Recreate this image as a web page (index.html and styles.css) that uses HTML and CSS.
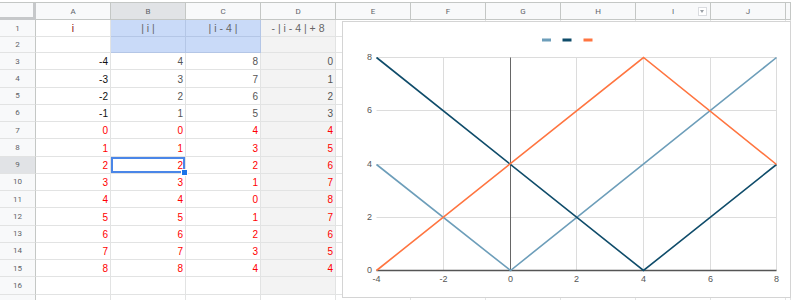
FILE: index.html
```html
<!DOCTYPE html>
<html lang="en">

<head>
      <meta charset="UTF-8">
      <title>Sheet with chart</title>
      <link rel="stylesheet" href="styles.css">
</head>

<body>
      <div class="sheet" id="sheet"></div>

      <!-- Biểu đồ nổi trên lưới -->
      <div class="chart">
            <svg width="447" height="275" viewBox="0 0 447 275">
                  <g class="legend">
                        <rect x="199" y="16.5" width="9" height="3" fill="#6d9eba"></rect>
                        <rect x="219.5" y="16.5" width="9" height="3" fill="#0f4c6a"></rect>
                        <rect x="240.5" y="16.5" width="9" height="3" fill="#ff7540"></rect>
                  </g>
                  <g stroke="#dcdcdc" stroke-width="1">
                        <line x1="33.5" y1="35.5" x2="433.5" y2="35.5"></line>
                        <line x1="33.5" y1="88.5" x2="433.5" y2="88.5"></line>
                        <line x1="33.5" y1="142.5" x2="433.5" y2="142.5"></line>
                        <line x1="33.5" y1="195.5" x2="433.5" y2="195.5"></line>
                        <line x1="100.5" y1="35.5" x2="100.5" y2="248.5"></line>
                        <line x1="233.5" y1="35.5" x2="233.5" y2="248.5"></line>
                        <line x1="300.5" y1="35.5" x2="300.5" y2="248.5"></line>
                        <line x1="367.5" y1="35.5" x2="367.5" y2="248.5"></line>
                        <line x1="433.5" y1="35.5" x2="433.5" y2="248.5"></line>
                  </g>
                  <line x1="167.5" y1="35.5" x2="167.5" y2="248.5" stroke="#666" stroke-width="1"></line>
                  <line x1="33.5" y1="248.5" x2="433.5" y2="248.5" stroke="#555" stroke-width="1.5"></line>
                  <g fill="none" stroke-width="1.6" stroke-linejoin="miter">
                        <polyline points="33.5,142.5 167.5,248.5 433.5,35.5" stroke="#6d9eba"></polyline>
                        <polyline points="33.5,35.5 300.5,248.5 433.5,142.5" stroke="#0f4c6a"></polyline>
                        <polyline points="33.5,248.5 300.5,35.5 433.5,142.5" stroke="#ff7540"></polyline>
                  </g>
                  <g class="axis-y" text-anchor="end">
                        <text x="29" y="38">8</text>
                        <text x="29" y="91">6</text>
                        <text x="29" y="145">4</text>
                        <text x="29" y="198">2</text>
                        <text x="29" y="251">0</text>
                  </g>
                  <g class="axis-x" text-anchor="middle">
                        <text x="33.5" y="260">-4</text>
                        <text x="100.5" y="260">-2</text>
                        <text x="167.5" y="260">0</text>
                        <text x="233.5" y="260">2</text>
                        <text x="300.5" y="260">4</text>
                        <text x="367.5" y="260">6</text>
                        <text x="433.5" y="260">8</text>
                  </g>
            </svg>
      </div>

      <script>
            const sheet = document.getElementById('sheet');
            const letters = ['A', 'B', 'C', 'D', 'E', 'F', 'G', 'H', 'I', 'J'];
            const titles = ['i', '| i |', '| i - 4 |', '- | i - 4 | + 8'];

            function addCell(cls, text) {
                  const d = document.createElement('div');
                  d.className = 'cell ' + cls;
                  if (text !== undefined) d.textContent = text;
                  sheet.appendChild(d);
                  return d;
            }

            // Hàng tiêu đề cột
            addCell('corner');
            letters.forEach(function (l) {
                  const h = addCell('colhead' + (l === 'B' ? ' active' : ''), l);
                  if (l === 'I') {
                        const f = document.createElement('span');
                        f.className = 'filter';
                        h.appendChild(f);
                  }
            });
            addCell('colhead');

            // Các hàng dữ liệu (hàng 17 chỉ lộ một phần ở mép dưới)
            for (let r = 1; r <= 17; r++) {
                  addCell('rownum' + (r === 9 ? ' active' : ''), r < 17 ? r : '');
                  for (let c = 0; c <= 10; c++) {
                        let cls = '';
                        let text = '';
                        if ((c === 1 || c === 2) && r <= 2) cls += ' blue';
                        if (c === 3 && r <= 16) cls += ' gray';
                        if (r === 1 && c <= 3) {
                              cls += ' title' + (c === 0 ? ' red-title' : '');
                              text = titles[c];
                        }
                        if (r >= 3 && r <= 15 && c <= 3) {
                              const i = r - 7;
                              const vals = [i, Math.abs(i), Math.abs(i - 4), 8 - Math.abs(i - 4)];
                              text = vals[c];
                              if (i >= 0) cls += ' red';
                              else if (c === 0) cls += ' black';
                              else cls += ' dim';
                        }
                        const d = addCell(cls, text);
                        if (r === 9 && c === 1) {
                              d.classList.add('sel');
                              const h = document.createElement('span');
                              h.className = 'handle';
                              d.appendChild(h);
                        }
                  }
            }
      </script>
</body>

</html>
```

FILE: styles.css
```css
/* Trang */
body {
      margin: 0;
      background-color: #fff;
      font-family: "Liberation Sans", Arial, sans-serif;
      overflow: hidden;
}

/* Lưới bảng tính */
.sheet {
      margin-top: 2px;
      border-top: 1px solid #c4c7c5;
      display: grid;
      grid-template-columns: 36px repeat(10, 75px) 1fr;
      grid-template-rows: 17px 17px 16px repeat(14, 17.25px) 17px;
      width: 791px;
}

.cell {
      box-sizing: border-box;
      border-right: 1px solid #e2e3e3;
      border-bottom: 1px solid #e2e3e3;
      display: flex;
      align-items: flex-end;
      justify-content: flex-end;
      padding: 0 2px 2px 0;
      font-size: 10px;
      line-height: 11px;
      white-space: nowrap;
      overflow: hidden;
      position: relative;
}

.corner {
      background-color: #f8f9fa;
      border-right: 3px solid #c6c8ca;
      border-bottom: 3px solid #c6c8ca;
}

.colhead {
      background-color: #f8f9fa;
      border-right: 1px solid #c4c7c5;
      border-bottom: 1px solid #c4c7c5;
      justify-content: center;
      align-items: center;
      padding: 0;
      font-family: Roboto, sans-serif;
      font-size: 8px;
      color: #5f6368;
}

.rownum {
      background-color: #f8f9fa;
      border-right: 1px solid #c4c7c5;
      justify-content: center;
      align-items: center;
      padding: 0;
      font-family: Roboto, sans-serif;
      font-size: 8px;
      color: #5f6368;
}

.colhead.active,
.rownum.active {
      background-color: #e1e3e6;
}

/* Nút lọc nhỏ ở cột I */
.filter {
      position: absolute;
      right: 3px;
      top: 4px;
      width: 7px;
      height: 7px;
      border: 1px solid #dadce0;
      background-color: #fff;
}

.filter::after {
      content: '';
      position: absolute;
      left: 1px;
      top: 2px;
      border-left: 2.5px solid transparent;
      border-right: 2.5px solid transparent;
      border-top: 3px solid #9aa0a6;
}

/* Màu nền và chữ của ô */
.blue {
      background-color: #c9daf8;
      border-right-color: #b4c6e6;
      border-bottom-color: #b4c6e6;
}

.gray {
      background-color: #f3f3f3;
}

.title {
      justify-content: center;
      padding-right: 0;
      color: #666;
      font-size: 10.5px;
}

.red-title {
      color: #8e1010;
}

.black {
      color: #111;
}

.dim {
      color: #555;
}

.red {
      color: #ff0000;
}

/* Ô đang chọn */
.sel {
      overflow: visible;
      box-shadow: inset 0 0 0 2px #4a86e8;
}

.handle {
      position: absolute;
      right: -3px;
      bottom: -3px;
      width: 5px;
      height: 5px;
      background-color: #1a73e8;
      border: 1px solid #fff;
      z-index: 2;
}

/* Biểu đồ */
.chart {
      position: absolute;
      left: 342px;
      top: 21px;
      width: 449px;
      height: 277px;
      box-sizing: border-box;
      border: 1px solid #d4d4d4;
      background-color: #fff;
      z-index: 3;
}

.chart svg {
      display: block;
}

.axis-y text,
.axis-x text {
      font-family: "Liberation Sans", Arial, sans-serif;
      font-size: 9px;
      fill: #555;
}
```
